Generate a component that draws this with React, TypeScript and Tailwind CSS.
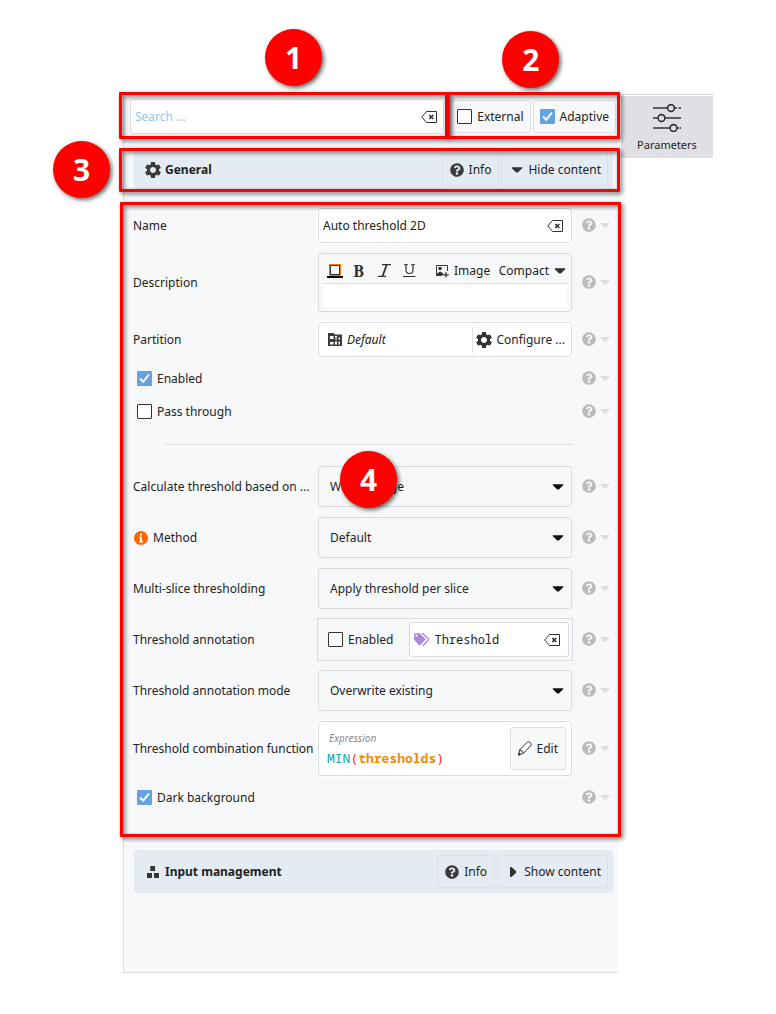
import React, { useState } from "react";
import { FaQuestionCircle } from "react-icons/fa";
import { MdSettings } from "react-icons/md";

type Children = { children?: React.ReactNode };

/* ---------- icons ---------- */

function BackspaceIcon() {
  return (
    <svg width="16" height="14" viewBox="0 0 16 14" fill="none" className="shrink-0">
      <path d="M5.500 1.500h10v11h-10L.8 7z" stroke="#333" />
      <path d="M8.300 5l4 4M12.300 5l-4 4" stroke="#333" strokeWidth="1.700" />
    </svg>
  );
}

function DownArrow({ className = "fill-[#333]" }: { className?: string }) {
  return (
    <svg width="12" height="6" viewBox="0 0 12 6" className={`shrink-0 ${className}`}>
      <path d="M.8.2h10.400v1L6.800 5.600H5.200L.8 1.200z" />
    </svg>
  );
}

function FaintArrow() {
  return (
    <svg width="12" height="5" viewBox="0 0 12 5" className="shrink-0 fill-[#dedede]">
      <path d="M1.200 0h9.600v.6L6.600 4.800H5.400L1.200.6z" />
    </svg>
  );
}

function RightArrow() {
  return (
    <svg width="6" height="12" viewBox="0 0 6 12" className="shrink-0 fill-[#333]">
      <path d="M0 1h1.400L6 5v2l-4.600 4H0z" />
    </svg>
  );
}

function SlidersIcon() {
  return (
    <svg width="28" height="28" viewBox="0 0 28 28" fill="none" stroke="#333" strokeWidth="1.600">
      <path d="M0 4h14.500M21.500 4H24M25.500 4H28M0 14h5M12 14h16M0 24h17M24 24h1.800M26.600 24H28" />
      <circle cx="18" cy="4" r="3.400" />
      <circle cx="8.500" cy="14" r="3.400" />
      <circle cx="20.500" cy="24" r="3.400" />
    </svg>
  );
}

function ImageAddIcon() {
  return (
    <svg width="13" height="14" viewBox="0 0 13 14" fill="none" className="shrink-0">
      <path d="M11.500 7V1.500H.5v10H6" stroke="#333" />
      <circle cx="4" cy="4.500" r="1.800" fill="#333" />
      <path d="M1 11V9.500L4 7.500l3.500 2V11z" fill="#333" />
      <path d="M10 8v5.500M7.200 10.800h5.600" stroke="#333" strokeWidth="1.200" />
    </svg>
  );
}

function PartitionIcon() {
  return (
    <svg width="14" height="13" viewBox="0 0 14 13" className="shrink-0">
      <path d="M0 0h5.500l1.500 1.500h7V13H0z" fill="#3b3b3b" />
      <path d="M2 3h3.500v3H2zM7 3h2v1.500H7zM10.500 4.500H12v2h-1.500zM7 5.500h2v1H7zM2 9h3.500v2.500H2zM7 8.500h2v3H7zM10.500 8.500H12v3h-1.500z" fill="#fff" />
    </svg>
  );
}

function BlocksIcon() {
  return (
    <svg width="12" height="12" viewBox="0 0 12 12" className="shrink-0 fill-[#333]">
      <path d="M3.300 0h4.800v5H3.300zM0 7h5v5H0zM7 7h5v5H7z" />
    </svg>
  );
}

function TagsIcon() {
  return (
    <svg width="15" height="13" viewBox="0 0 15 13" className="shrink-0">
      <path d="M0 1.200Q0 .3 1 .3h4.800L11 5.500q.8.8 0 1.600l-4.600 4.800q-.8.600-1.600 0L0 6.400z" fill="#ab87dd" />
      <circle cx="2.500" cy="2.700" r="1.100" fill="#fff" />
      <path d="M7.800.5h1l5.400 5.200q.8.800 0 1.600L9.300 12.300h-.8" fill="none" stroke="#ab87dd" strokeWidth="1.300" />
    </svg>
  );
}

function PencilIcon() {
  return (
    <svg width="14" height="15" viewBox="0 0 14 15" fill="none" stroke="#333" className="shrink-0">
      <path d="M.7 14l.8-5L9.300 1.200q1.200-1 2.400 0l1 1.200q1 1.200 0 2.300L5.500 12.300zM1.800 9.200q2.600.2 3.500 2.800" />
      <path d="M.6 14.200l.5-2 1.500 1.300z" fill="#333" />
    </svg>
  );
}

function InfoIcon() {
  return (
    <svg width="15" height="14" viewBox="0 0 15 14" className="shrink-0">
      <circle cx="8" cy="7" r="7" fill="#ff6600" />
      <path d="M7 2.500h2v2H7zM6 5.800h3v4.400h1v1.300H6v-1.300h1V7H6z" fill="#fff" />
    </svg>
  );
}

function ColorIcon() {
  return (
    <svg width="16" height="14" viewBox="0 0 16 14">
      <path d="M2 0h12v12H2z" fill="#f57c00" />
      <path d="M3.500 1.500h9v9h-9z" fill="#f7f8fa" stroke="#333" />
      <path d="M0 12h16v2H0z" fill="#000" />
    </svg>
  );
}

/* ---------- callouts ---------- */

function Frame({ className }: { className: string }) {
  return (
    <div
      className={`pointer-events-none absolute z-10 rounded-[1px] border-3 border-[#ff0000] drop-shadow-[2px_2px_2px_rgba(0,0,0,0.6)] ${className}`}
    />
  );
}

function Marker({ className, children }: Children & { className: string }) {
  return (
    <div
      className={`absolute z-20 flex size-[57px] items-center justify-center rounded-full bg-[#ff0000] pt-px text-[30px] leading-[30px] font-bold text-white shadow-[2px_2px_4px_rgba(0,0,0,0.6)] ${className}`}
    >
      {children}
    </div>
  );
}

/* ---------- controls ---------- */

function Check({ label, initial = false, className = "" }: { label: string; initial?: boolean; className?: string }) {
  const [on, setOn] = useState(initial);
  return (
    <label className={`flex items-center gap-[5px] ${className}`}>
      <span className="grid size-[15px] shrink-0">
        <input
          type="checkbox"
          checked={on}
          onChange={(e) => setOn(e.target.checked)}
          className="peer col-start-1 row-start-1 size-[15px] appearance-none rounded-[1px] border border-[#333] bg-white checked:border-[#64a2e2] checked:bg-[#64a2e2]"
        />
        <svg
          viewBox="0 0 15 15"
          className="pointer-events-none invisible col-start-1 row-start-1 size-[15px] fill-none stroke-white stroke-2 peer-checked:visible"
        >
          <path d="M3 7.500l3.200 3.300L12 3.500" />
        </svg>
      </span>
      {label}
    </label>
  );
}

function Button({ className = "", children }: Children & { className?: string }) {
  return (
    <button type="button" className={`flex items-center rounded-[3px] border border-[#dddfe2] ${className}`}>
      {children}
    </button>
  );
}

function Help() {
  return (
    <button type="button" aria-label="Help" className="flex h-[15px] items-start gap-[3px] pl-[9px]">
      <FaQuestionCircle size={14} color="#bbbbbb" />
      <span className="pt-[5px]">
        <FaintArrow />
      </span>
    </button>
  );
}

function Row({ label, htmlFor, icon, height, children }: Children & { label: string; htmlFor?: string; icon?: React.ReactNode; height: string }) {
  return (
    <div className={`grid grid-cols-[184px_1fr_45px] items-center ${height}`}>
      <label htmlFor={htmlFor} className="flex items-center gap-[5px] whitespace-nowrap">
        {icon}
        {label}
      </label>
      {children}
      <Help />
    </div>
  );
}

function CheckRow({ label, initial }: { label: string; initial?: boolean }) {
  return (
    <div className="grid h-[25px] grid-cols-[1fr_45px] items-center">
      <Check label={label} initial={initial} className="pl-1" />
      <Help />
    </div>
  );
}

function Field({ className = "", children }: Children & { className?: string }) {
  return (
    <div className="h-full min-w-0 bg-white p-px">
      <div className={`flex h-full items-center rounded-[3px] border border-[#d9dbdf] ${className}`}>{children}</div>
    </div>
  );
}

function SelectRow({ id, label, options, icon }: { id: string; label: string; options: string[]; icon?: React.ReactNode }) {
  return (
    <Row label={label} htmlFor={id} icon={icon} height="h-[43px]">
      <div className="grid h-full min-w-0 items-center p-px">
        <select
          id={id}
          className="col-start-1 row-start-1 h-full w-full appearance-none rounded-[3px] border border-[#d9dbdf] bg-[#f7f8fa] pl-[11px]"
        >
          {options.map((o) => (
            <option key={o}>{o}</option>
          ))}
        </select>
        <div className="pointer-events-none col-start-1 row-start-1 justify-self-end pr-2">
          <DownArrow className="fill-[#111]" />
        </div>
      </div>
    </Row>
  );
}

function SectionHeader({ title, icon, open }: { title: string; icon: React.ReactNode; open: boolean }) {
  return (
    <div className="mr-[5px] ml-[10px] flex h-[43px] items-center gap-[2px] rounded-[3px] bg-[#e4ebf3] pr-[5px] pl-[9px]">
      <h2 className="flex flex-1 items-center gap-[2px] font-bold">
        <span className="flex w-[20px] justify-center">{icon}</span>
        {title}
      </h2>
      <Button className="h-[33px] gap-[5px] px-[7px]">
        <FaQuestionCircle size={14} color="#3b3b3b" />
        Info
      </Button>
      <Button className="h-[33px] gap-[5px] pr-[6px] pl-[9px]">
        <span className="flex w-[12px] justify-center">{open ? <DownArrow /> : <RightArrow />}</span>
        {open ? "Hide content" : "Show content"}
      </Button>
    </div>
  );
}

const mono = "font-['Noto_Sans_Mono','DejaVu_Sans_Mono',monospace]";

export default function App() {
  return (
    <div className="flex items-start bg-white pt-[94px] pr-[62px] pl-[123px] font-['Noto_Sans',sans-serif] text-[12px] leading-[16px] text-[#232323]">
      <main className="min-w-0 flex-1 border-b border-l border-[#dadbe0] bg-[#f7f8fa] pb-[79px]">
        <div className="flex h-[45px]">
          <div className="relative flex min-w-0 flex-1 items-center pr-1 pl-[6px]">
            <div className="flex h-[35px] w-full items-center rounded-[3px] border border-[#d9dbdf] bg-white pr-[6px] pl-1">
              <input
                type="text"
                aria-label="Search"
                placeholder="Search ..."
                className="min-w-0 flex-1 bg-transparent outline-none placeholder:text-[#95c5f0]"
              />
              <button type="button" aria-label="Clear search">
                <BackspaceIcon />
              </button>
            </div>
            <Frame className="-top-[2px] right-0 bottom-0 -left-[5px]" />
            <Marker className="-top-[65px] left-[141px]">1</Marker>
          </div>
          <div className="relative flex items-center gap-[2px] pr-[2px] pl-[2px]">
            <div className="flex h-[33px] items-center rounded-[3px] border border-[#dddfe2] px-[6px]">
              <Check label="External" />
            </div>
            <div className="flex h-[33px] items-center rounded-[3px] border border-[#dddfe2] px-[6px]">
              <Check label="Adaptive" initial />
            </div>
            <Frame className="-top-[2px] -right-[2px] bottom-0 -left-px" />
            <Marker className="-top-[63px] left-[54px]">2</Marker>
          </div>
        </div>

        <section className="relative mt-[9px]">
          <SectionHeader title="General" icon={<MdSettings size={20} color="#3b3b3b" className="shrink-0" />} open />
          <Frame className="top-0 -right-[2px] -bottom-px -left-[5px]" />
          <Marker className="-top-[7px] -left-[71px]">3</Marker>
        </section>

        <section className="relative mt-[11px] flex flex-col gap-2 pt-[5px] pb-[27px] pl-[9px]">
          <Row label="Name" htmlFor="name" height="h-[37px]">
            <Field className="pr-2 pl-1">
              <input id="name" type="text" defaultValue="Auto threshold 2D" className="min-w-0 flex-1 bg-transparent outline-none" />
              <button type="button" aria-label="Clear name">
                <BackspaceIcon />
              </button>
            </Field>
          </Row>

          <Row label="Description" htmlFor="description" height="h-[61px]">
            <div className="h-full min-w-0 p-px">
              <div className="flex h-full flex-col rounded-[3px] border border-[#d9dbdf] px-1 pb-1">
                <div className="flex flex-1 items-center justify-between border-b border-[#dddfe2] pt-[4px] pr-px pl-1">
                  <button type="button" aria-label="Text colour">
                    <ColorIcon />
                  </button>
                  <div className="flex items-center gap-[12px] font-['Noto_Serif','DejaVu_Serif',serif] text-[16px] leading-[18px] text-[#333]">
                    <button type="button" className="w-[14px] font-bold">B</button>
                    <button type="button" aria-label="Italic">
                      <svg width="13" height="13" viewBox="0 0 13 13" fill="none" stroke="#333">
                        <path d="M4 .7h9M0 12.300h8" strokeWidth="1.200" />
                        <path d="M8.700.5l-4.200 12" strokeWidth="1.800" />
                      </svg>
                    </button>
                    <button type="button" aria-label="Underline">
                      <svg width="13" height="13" viewBox="0 0 13 13" fill="none" stroke="#333">
                        <path d="M1 .7h4M8 .7h4M0 12.500h12.500" />
                        <path d="M3 .5V6q0 3.500 3.500 3.500T10 6V.5" strokeWidth="1.200" />
                      </svg>
                    </button>
                  </div>
                  <button type="button" className="ml-[12px] flex items-center gap-[5px]">
                    <ImageAddIcon />
                    Image
                  </button>
                  <button type="button" className="flex items-center gap-[5px]">
                    Compact
                    <DownArrow />
                  </button>
                </div>
                <textarea id="description" rows={1} className="h-[23px] resize-none bg-white outline-none" />
              </div>
            </div>
          </Row>

          <Row label="Partition" height="h-[37px]">
            <Field className="pr-[6px] pl-[9px]">
              <button type="button" className="flex flex-1 items-center gap-[5px] italic">
                <PartitionIcon />
                Default
              </button>
              <button type="button" className="flex h-[26px] items-center gap-[2px] border-l border-[#dddfe2] pl-px">
                <MdSettings size={20} color="#333" className="shrink-0" />
                Configure ...
              </button>
            </Field>
          </Row>

          <CheckRow label="Enabled" initial />
          <CheckRow label="Pass through" />

          <div className="flex h-[25px] items-center pr-[45px] pl-8">
            <hr className="w-full border-[#e0e1e4]" />
          </div>

          <SelectRow id="source" label="Calculate threshold based on ..." options={["Whole image", "Inside mask", "Inside ROI"]} />
          <SelectRow id="method" label="Method" icon={<InfoIcon />} options={["Default", "Otsu", "Triangle"]} />
          <SelectRow id="slices" label="Multi-slice thresholding" options={["Apply threshold per slice", "Combine slice thresholds"]} />

          <Row label="Threshold annotation" htmlFor="annotation" height="h-[43px]">
            <div className="flex h-full min-w-0 items-center gap-4 border border-[#d9dbdf] pr-[3px] pl-[10px]">
              <Check label="Enabled" />
              <div className="flex h-[35px] min-w-0 flex-1 items-center gap-[5px] rounded-[3px] border border-[#d9dbdf] bg-white pr-2 pl-1">
                <TagsIcon />
                <input id="annotation" type="text" defaultValue="Threshold" className={`min-w-0 flex-1 bg-transparent outline-none ${mono}`} />
                <button type="button" aria-label="Clear annotation">
                  <BackspaceIcon />
                </button>
              </div>
            </div>
          </Row>

          <SelectRow id="mode" label="Threshold annotation mode" options={["Overwrite existing", "Merge"]} />

          <Row label="Threshold combination function" height="h-[57px]">
            <Field className="justify-between pr-[5px] pl-2">
              <div className="flex flex-col gap-1 pb-[2px]">
                <span className="pl-[2px] text-[10px] text-[#888] italic">Expression</span>
                <code className={`text-[13px] ${mono}`}>
                  <span className="text-[#14a5b5]">MIN</span>
                  <span className="text-[#ff1744]">(</span>
                  <span className="font-bold text-[#f08c00]">thresholds</span>
                  <span className="text-[#ff1744]">)</span>
                </code>
              </div>
              <Button className="h-[43px] gap-[5px] bg-[#f7f8fa] px-[7px]">
                <PencilIcon />
                Edit
              </Button>
            </Field>
          </Row>

          <CheckRow label="Dark background" initial />

          <Frame className="top-0 -right-[3px] bottom-0 -left-[4px]" />
          <Marker className="top-[249px] left-[216px]">4</Marker>
        </section>

        <section className="mt-[13px]">
          <SectionHeader title="Input management" icon={<BlocksIcon />} open={false} />
        </section>
      </main>

      <nav className="w-[96px] shrink-0 border-t border-[#dadbe0] pt-px pr-px pl-[3px]">
        <button type="button" className="flex h-[62px] w-full flex-col items-center gap-[5px] bg-[#dfe0e5] pt-2 text-[11px] leading-[16px]">
          <SlidersIcon />
          Parameters
        </button>
      </nav>
    </div>
  );
}
